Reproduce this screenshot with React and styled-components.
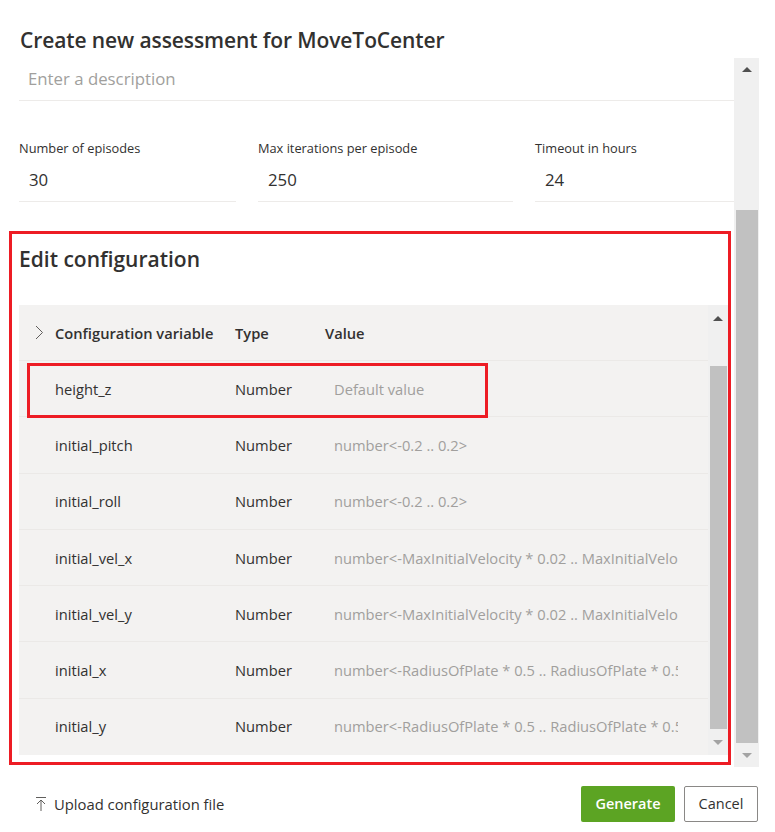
import React from 'react'
import styled, { createGlobalStyle } from 'styled-components'

const GlobalStyle = createGlobalStyle`
    html, body {
        margin: 0;
        padding: 0;
        background: #ffffff;
    }
    body {
        font-family: "Segoe UI", "Open Sans", "Noto Sans", sans-serif;
        color: #323130;
    }
`

const rows = [
    { name: 'height_z', type: 'Number', value: 'Default value', marked: true },
    { name: 'initial_pitch', type: 'Number', value: 'number<-0.2 .. 0.2>' },
    { name: 'initial_roll', type: 'Number', value: 'number<-0.2 .. 0.2>' },
    { name: 'initial_vel_x', type: 'Number', value: 'number<-MaxInitialVelocity * 0.02 .. MaxInitialVelocity * 0.02>' },
    { name: 'initial_vel_y', type: 'Number', value: 'number<-MaxInitialVelocity * 0.02 .. MaxInitialVelocity * 0.02>' },
    { name: 'initial_x', type: 'Number', value: 'number<-RadiusOfPlate * 0.5 .. RadiusOfPlate * 0.5>' },
    { name: 'initial_y', type: 'Number', value: 'number<-RadiusOfPlate * 0.5 .. RadiusOfPlate * 0.5>' },
]

const fields = [
    { label: 'Number of episodes', value: '30' },
    { label: 'Max iterations per episode', value: '250' },
    { label: 'Timeout in hours', value: '24' },
]

function Scrollbar({ upHeight, gap, thumb, downHeight, wide }) {
    return (
        <Track wide={wide}>
            <ArrowBox h={upHeight}><UpArrow /></ArrowBox>
            <Thumb gap={gap} h={thumb} />
            <ArrowBox h={downHeight}><DownArrow /></ArrowBox>
        </Track>
    )
}

function App() {
    return (
        <Dialog>
            <GlobalStyle />
            <Title>Create new assessment for MoveToCenter</Title>
            <Body>
                <Content>
                    <Description>Enter a description</Description>
                    <Fields>
                        {fields.map(f => (
                            <Field key={f.label}>
                                <Label>{f.label}</Label>
                                <FieldValue>{f.value}</FieldValue>
                            </Field>
                        ))}
                    </Fields>
                    <ConfigSection>
                        <SectionTitle>Edit configuration</SectionTitle>
                        <Table>
                            <Grid>
                                <HeaderRow>
                                    <ChevronCell>
                                        <svg width="9" height="15" viewBox="0 0 9 15">
                                            <path d="M1 1 L7.5 7.5 L1 14" fill="none" stroke="#605e5c" strokeWidth="1" />
                                        </svg>
                                    </ChevronCell>
                                    <NameCell>Configuration variable</NameCell>
                                    <TypeCell>Type</TypeCell>
                                    <HeadValue>Value</HeadValue>
                                </HeaderRow>
                                {rows.map(r => (
                                    <Row key={r.name}>
                                        <ChevronCell />
                                        <NameCell>{r.name}</NameCell>
                                        <TypeCell>{r.type}</TypeCell>
                                        <ValueCell>{r.value}</ValueCell>
                                        {r.marked && <Marker />}
                                    </Row>
                                ))}
                            </Grid>
                            <Scrollbar upHeight={26} gap={35} thumb={363} downHeight={26} />
                        </Table>
                    </ConfigSection>
                </Content>
                <Scrollbar upHeight={22} gap={130} thumb={533} downHeight={24} wide />
            </Body>
            <Footer>
                <UploadLink>
                    <svg width="12" height="16" viewBox="0 0 12 16">
                        <path d="M1 1.5 H11 M6 4 V15 M2 8 L6 4 L10 8" fill="none" stroke="#605e5c" strokeWidth="1" />
                    </svg>
                    Upload configuration file
                </UploadLink>
                <Actions>
                    <PrimaryButton>Generate</PrimaryButton>
                    <DefaultButton>Cancel</DefaultButton>
                </Actions>
            </Footer>
        </Dialog>
    )
}

export default App

const Dialog = styled.div`
    width: 775px;
    height: 832px;
    display: flex;
    flex-direction: column;
    overflow: hidden;
`

const Title = styled.h1`
    margin: 0;
    padding: 26px 0 0 20px;
    height: 32px;
    flex-shrink: 0;
    font-size: 21px;
    line-height: 28px;
    font-weight: 600;
    color: #323130;
    letter-spacing: -0.1px;
`

const Body = styled.div`
    display: flex;
    height: 709px;
    flex-shrink: 0;
    padding-left: 9px;
    padding-right: 16px;
`

const Content = styled.div`
    flex: 1;
    display: flex;
    flex-direction: column;
    min-width: 0;
`

const Description = styled.div`
    margin-left: 10px;
    margin-right: -1px;
    height: 40px;
    padding: 0 0 2px 9px;
    display: flex;
    align-items: center;
    font-size: 16.8px;
    color: #a19f9d;
    border-bottom: 1px solid #edebe9;
`

const Fields = styled.div`
    margin: 37px -1px 0 10px;
    display: grid;
    grid-template-columns: 217px 255px 1fr;
    column-gap: 22px;
`

const Field = styled.div`
    display: flex;
    flex-direction: column;
`

const Label = styled.div`
    font-size: 12.8px;
    line-height: 20px;
    color: #323130;
`

const FieldValue = styled.div`
    height: 43px;
    padding-left: 10px;
    display: flex;
    align-items: center;
    font-size: 16.8px;
    color: #323130;
    border-bottom: 1px solid #edebe9;
`

const ConfigSection = styled.section`
    margin-top: 29px;
    width: 722px;
    height: 534px;
    flex-shrink: 0;
    box-sizing: border-box;
    border: 3px solid #ed1c24;
    padding: 11px 0 0 7px;
    display: flex;
    flex-direction: column;
`

const SectionTitle = styled.h2`
    margin: 0;
    font-size: 21px;
    line-height: 28px;
    font-weight: 600;
    color: #323130;
`

const Table = styled.div`
    margin-top: 32px;
    height: 450px;
    flex-shrink: 0;
    display: flex;
    background: #f3f2f1;
`

const Grid = styled.div`
    flex: 1;
    display: flex;
    flex-direction: column;
    overflow: hidden;
`

const HeaderRow = styled.div`
    display: flex;
    align-items: center;
    height: 55px;
    flex-shrink: 0;
    font-size: 14.7px;
    font-weight: 600;
    color: #323130;
`

const Row = styled.div`
    position: relative;
    display: flex;
    align-items: center;
    height: 56.3px;
    flex-shrink: 0;
    border-top: 1px solid #ebe9e7;
    box-sizing: border-box;
    font-size: 14.7px;
    color: #323130;
`

const ChevronCell = styled.div`
    width: 36px;
    flex-shrink: 0;
    display: flex;
    justify-content: center;
    padding-left: 4px;
    box-sizing: border-box;
`

const NameCell = styled.div`
    width: 180px;
    flex-shrink: 0;
    white-space: nowrap;
`

const TypeCell = styled.div`
    width: 90px;
    flex-shrink: 0;
`

const HeadValue = styled.div`
    flex: 1;
`

const ValueCell = styled.div`
    width: 344px;
    padding-left: 9px;
    white-space: nowrap;
    overflow: hidden;
    color: #a19f9d;
`

const Marker = styled.div`
    position: absolute;
    z-index: 1;
    left: 8px;
    top: 2px;
    width: 461px;
    height: 55px;
    box-sizing: border-box;
    border: 3px solid #ed1c24;
    pointer-events: none;
`

const Track = styled.div`
    width: ${p => (p.wide ? 25 : 20)}px;
    flex-shrink: 0;
    display: flex;
    flex-direction: column;
    align-items: center;
    background: #f0f0f0;
`

const ArrowBox = styled.div`
    height: ${p => p.h}px;
    width: 100%;
    display: flex;
    align-items: center;
    justify-content: center;
    flex-shrink: 0;
`

const UpArrow = styled.div`
    width: 0;
    height: 0;
    border-left: 5px solid transparent;
    border-right: 5px solid transparent;
    border-bottom: 5px solid #505050;
`

const DownArrow = styled.div`
    width: 0;
    height: 0;
    border-left: 5px solid transparent;
    border-right: 5px solid transparent;
    border-top: 5px solid #a3a3a3;
`

const Thumb = styled.div`
    margin-top: ${p => p.gap}px;
    height: ${p => p.h}px;
    width: calc(100% - 3px);
    margin-left: 1px;
    background: #c1c1c1;
    flex-shrink: 0;
`

const Footer = styled.div`
    height: 65px;
    flex-shrink: 0;
    box-sizing: border-box;
    display: flex;
    align-items: center;
    justify-content: space-between;
    padding: 8px 17px 0 35px;
`

const UploadLink = styled.div`
    display: flex;
    align-items: center;
    gap: 7px;
    font-size: 14.8px;
    color: #323130;
`

const Actions = styled.div`
    display: flex;
    gap: 9px;
`

const PrimaryButton = styled.button`
    height: 36px;
    width: 94px;
    border: none;
    border-radius: 2px;
    background: #5ca423;
    color: #ffffff;
    font-family: inherit;
    font-size: 14.5px;
    font-weight: 600;
`

const DefaultButton = styled.button`
    height: 36px;
    width: 74px;
    border: 1px solid #8a8886;
    border-radius: 2px;
    background: #ffffff;
    color: #323130;
    font-family: inherit;
    font-size: 14.5px;
`
